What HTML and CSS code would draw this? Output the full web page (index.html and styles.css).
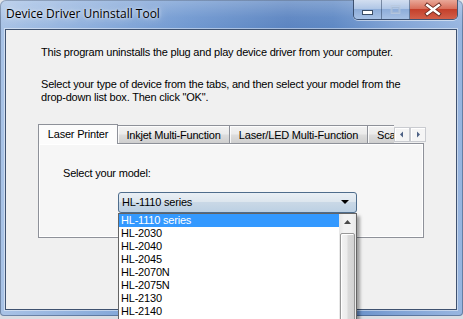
FILE: index.html
```html
<!DOCTYPE html>
<html>
<head>
<meta charset="utf-8">
<link rel="stylesheet" href="styles.css">
</head>
<body>
<div class="window">
  <div class="titlebar">
    <span class="title">Device Driver Uninstall Tool</span>
    <div class="caption-btns">
      <div class="cbtn cmin">
        <svg width="27" height="19" viewBox="0 0 27 19"><rect x="8.5" y="10.5" width="10" height="4" fill="#fff" stroke="#3b4d66" stroke-width="1"/></svg>
      </div>
      <div class="cbtn cmax">
        <svg width="28" height="19" viewBox="0 0 28 19"><rect x="9.5" y="5.5" width="9" height="8" fill="none" stroke="#b9c9de" stroke-width="1"/><rect x="10.5" y="7.5" width="7" height="5" fill="none" stroke="#a8bcd6" stroke-width="1"/></svg>
      </div>
      <div class="cbtn cclose">
        <svg width="49" height="19" viewBox="0 0 49 19"><path d="M18 5 L30 14 M30 5 L18 14" stroke="#6b2a20" stroke-width="4.4" stroke-linecap="square"/><path d="M18 5 L30 14 M30 5 L18 14" stroke="#fff" stroke-width="2.6" stroke-linecap="square"/></svg>
      </div>
    </div>
  </div>
  <div class="client">
    <p class="intro">This program uninstalls the plug and play device driver from your computer.</p>
    <p class="instr">Select your type of device from the tabs, and then select your model from the<br>drop-down list box. Then click "OK".</p>
    <div class="tabs">
      <div class="tabstrip">
        <div class="tablist">
          <div class="tab active w1">Laser Printer</div>
          <div class="tab w2">Inkjet Multi-Function</div>
          <div class="tab w3">Laser/LED Multi-Function</div>
          <div class="tab w4">Sca</div>
        </div>
        <div class="tabscroll">
          <div class="sbtn"><svg width="14" height="13" viewBox="0 0 14 13"><path d="M5 6.5 L8 3.5 L8 9.5 Z" fill="#4d6185"/></svg></div>
          <div class="sbtn"><svg width="14" height="13" viewBox="0 0 14 13"><path d="M9 6.5 L6 3.5 L6 9.5 Z" fill="#4d6185"/></svg></div>
        </div>
      </div>
      <div class="panel">
        <div class="label">Select your model:</div>
        <div class="combo-wrap">
          <div class="combo">
            <span class="combo-text">HL-1110 series</span>
            <svg class="combo-arrow" width="9" height="5" viewBox="0 0 9 5"><path d="M0 0 H8 L4 4 Z" fill="#000"/></svg>
          </div>
          <div class="dropdown">
            <div class="items">
              <div class="item sel">HL-1110 series</div>
              <div class="item">HL-2030</div>
              <div class="item">HL-2040</div>
              <div class="item">HL-2045</div>
              <div class="item">HL-2070N</div>
              <div class="item">HL-2075N</div>
              <div class="item">HL-2130</div>
              <div class="item">HL-2140</div>
            </div>
            <div class="vscroll">
              <div class="vbtn"><svg width="17" height="17" viewBox="0 0 17 17"><path d="M8.5 6 L12 10 L5 10 Z" fill="#4a4a4a"/></svg></div>
              <div class="thumb"></div>
            </div>
          </div>
        </div>
      </div>
    </div>
  </div>
</div>
</body>
</html>
```

FILE: styles.css
```css
html, body {
  margin: 0;
  padding: 0;
}
body {
  width: 463px;
  height: 319px;
  overflow: hidden;
  background: #d9dde3;
  font-family: "Liberation Sans", Arial, sans-serif;
  font-size: 11px;
  color: #000;
}
.window {
  height: 316px;
  box-sizing: border-box;
  display: flex;
  flex-direction: column;
  background:
    linear-gradient(to right, #a9c3e6 0%, #8fb0dd 18%, #7199d1 40%, #5b84c1 62%, #5e88c4 72%, #7fa2d5 85%, #98b6e0 100%);
  border-radius: 6px 6px 4px 4px;
  box-shadow: inset 0 0 0 1px rgba(40, 60, 90, 0.45);
}
.titlebar {
  height: 29px;
  flex: none;
  display: flex;
  align-items: flex-start;
  padding-left: 6px;
  padding-right: 5px;
  background: linear-gradient(to bottom, rgba(255,255,255,0.25), rgba(255,255,255,0.05) 60%, rgba(255,255,255,0));
}
.title {
  font-family: "Open Sans", "Liberation Sans", sans-serif;
  font-size: 12px;
  line-height: 16px;
  margin-top: 6px;
  color: #000;
  text-shadow: 0 0 8px rgba(255,255,255,0.9), 0 0 3px rgba(255,255,255,0.9);
}
.caption-btns {
  margin-left: auto;
  display: flex;
  height: 20px;
  box-sizing: border-box;
  border: 1px solid rgba(30, 45, 70, 0.7);
  border-top: none;
  border-radius: 0 0 5px 5px;
  overflow: hidden;
  box-shadow: 0 1px 0 rgba(255,255,255,0.5);
}
.cbtn {
  height: 19px;
  display: flex;
}
.cmin {
  width: 27px;
  background: linear-gradient(to bottom, #d2def0 0%, #b1c7e6 45%, #8eadd9 50%, #a7c1e5 100%);
  border-right: 1px solid rgba(40, 60, 90, 0.5);
}
.cmax {
  width: 27px;
  background: linear-gradient(to bottom, #d2def0 0%, #b1c7e6 45%, #8eadd9 50%, #a7c1e5 100%);
  border-right: 1px solid rgba(40, 60, 90, 0.5);
}
.cclose {
  width: 47px;
  background: linear-gradient(to bottom, #e9a898 0%, #d9705c 45%, #c4402b 50%, #d2604a 100%);
}
.client {
  height: 281px;
  flex: none;
  box-sizing: border-box;
  margin: 0 6px 0 5px;
  background: #f0f0f0;
  border: 1px solid #3f5270;
  box-shadow: 0 0 0 1px rgba(255,255,255,0.45);
  position: relative;
}
.intro, .instr, .label, .tab, .item, .combo-text {
  letter-spacing: -0.2px;
}
.intro {
  margin: 16px 0 0 35px;
  line-height: 13px;
}
.instr {
  margin: 19px 0 0 35px;
  line-height: 13px;
}
.tabs {
  margin: 20px 0 0 32px;
  width: 388px;
}
.tabstrip {
  display: flex;
  align-items: flex-end;
  height: 19px;
}
.tablist {
  width: 356px;
  height: 20px;
  display: flex;
  align-items: flex-end;
  overflow: hidden;
  margin-bottom: -1px;
  position: relative;
  z-index: 2;
}
.tab {
  flex: none;
  box-sizing: border-box;
  height: 18px;
  margin-bottom: 1px;
  border: 1px solid #8e9199;
  border-bottom: none;
  border-left: none;
  text-align: center;
  line-height: 16px;
  padding-top: 1px;
  white-space: nowrap;
  background: linear-gradient(to bottom, #f2f2f2 0%, #ebebeb 48%, #dddddd 52%, #cfcfcf 100%);
  box-shadow: inset 1px 1px 0 rgba(255,255,255,0.8);
}
.tab.active {
  height: 20px;
  margin-bottom: 0;
  border-left: 1px solid #8e9199;
  background: #fcfcfc;
  line-height: 16px;
  padding-top: 1px;
  box-shadow: none;
}
.w1 { width: 80px; }
.w2 { width: 112px; }
.w3 { width: 138px; }
.w4 { width: 30px; text-align: left; padding-left: 9px; overflow: hidden; }
.tabscroll {
  display: flex;
  height: 15px;
  margin-bottom: 1px;
}
.sbtn {
  width: 16px;
  height: 15px;
  box-sizing: border-box;
  border: 1px solid #c9cbd0;
  background: #f5f5f5;
  box-shadow: inset 1px 1px 0 #fff;
  display: flex;
  align-items: center;
  justify-content: center;
}
.panel {
  width: 386px;
  height: 95px;
  box-sizing: border-box;
  border: 1px solid #8e9199;
  background: #f6f6f6;
  box-shadow: inset 1px 1px 0 #fff, inset -1px -1px 0 #fff;
  padding: 23px 0 0 24px;
  position: relative;
  z-index: 1;
}
.label {
  line-height: 13px;
}
.combo-wrap {
  position: relative;
  margin: 12px 0 0 55px;
  width: 239px;
}
.combo {
  height: 21px;
  box-sizing: border-box;
  border: 1px solid #4f6d8c;
  border-radius: 3px;
  background: linear-gradient(to bottom, #e9eff5 0%, #dde6ee 45%, #c9d8e6 50%, #bcd0e3 100%);
  display: flex;
  align-items: center;
  padding-left: 3px;
  padding-right: 6px;
  line-height: 13px;
}
.combo-text {
  flex: 1;
}
.combo-arrow {
  display: block;
}
.dropdown {
  position: absolute;
  top: 100%;
  left: 0;
  width: 239px;
  height: 110px;
  box-sizing: border-box;
  border: 1px solid #646464;
  border-bottom: none;
  background: #fff;
  display: flex;
  box-shadow: 3px 3px 3px rgba(0,0,0,0.35);
  z-index: 5;
}
.items {
  flex: 1;
}
.item {
  height: 13px;
  line-height: 13px;
  padding-left: 2px;
  white-space: nowrap;
}
.item.sel {
  background: #3399ff;
  color: #fff;
}
.vscroll {
  width: 17px;
  flex: none;
  background: linear-gradient(to right, #e6e6e6, #f2f2f2 30%, #f2f2f2 70%, #e8e8e8);
  display: flex;
  flex-direction: column;
  align-items: center;
}
.vbtn {
  width: 17px;
  height: 17px;
}
.thumb {
  margin-top: 2px;
  width: 15px;
  flex: 1;
  box-sizing: border-box;
  border: 1px solid #979797;
  border-radius: 2px;
  background: linear-gradient(to right, #f3f3f3 0%, #ececec 45%, #dadada 55%, #d2d2d2 100%);
  box-shadow: inset 1px 1px 0 #fff;
}
```
